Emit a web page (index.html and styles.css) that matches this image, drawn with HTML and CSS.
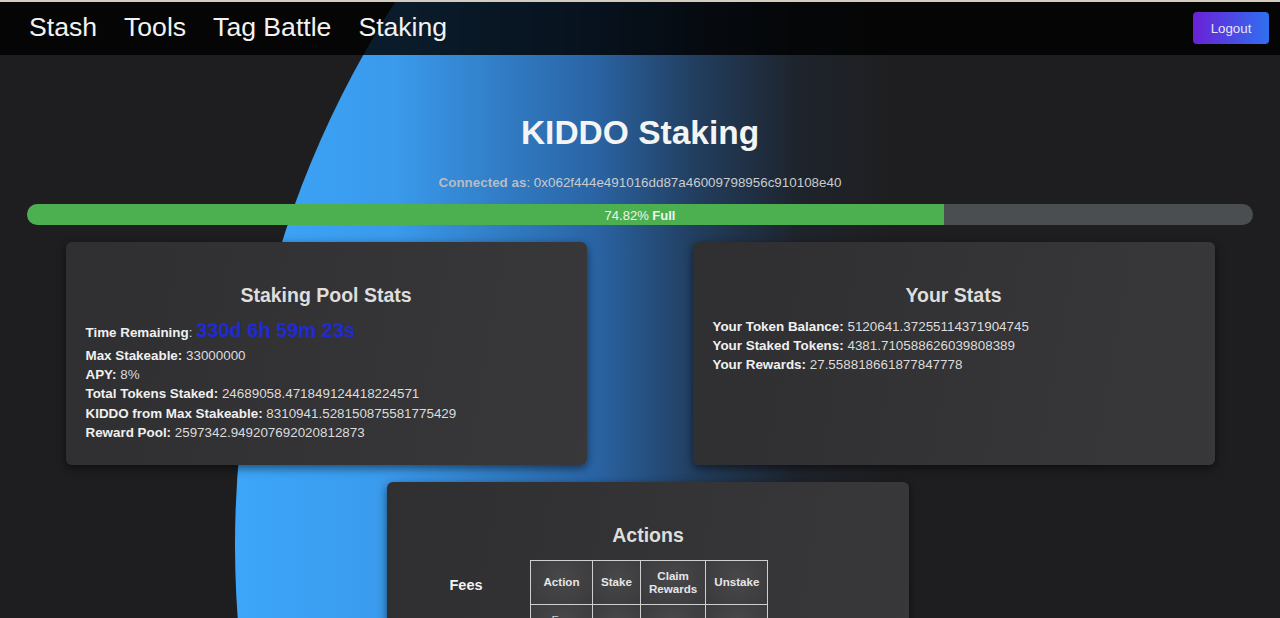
FILE: index.html
```html
<!DOCTYPE html>
<html lang="en">
<head>
<meta charset="utf-8">
<title>KIDDO Staking</title>
<link rel="stylesheet" href="styles.css">
</head>
<body>
<div class="page">
  <div class="glow"></div>
  <nav class="nav">
    <div class="nav-links">
      <a class="nav-link" href="#">Stash</a>
      <a class="nav-link" href="#">Tools</a>
      <a class="nav-link" href="#">Tag Battle</a>
      <a class="nav-link" href="#">Staking</a>
    </div>
    <button class="logout" type="button">Logout</button>
  </nav>
  <main class="main">
    <h1 class="title">KIDDO Staking</h1>
    <p class="connected"><b>Connected as</b>: 0x062f444e491016dd87a46009798956c910108e40</p>
    <div class="progress">
      <div class="progress-fill" style="width:74.82%"></div>
      <span class="progress-label">74.82% <b>Full</b></span>
    </div>
    <div class="cards">
      <section class="card">
        <h3 class="card-title">Staking Pool Stats</h3>
        <div class="row row-timer"><b>Time Remaining</b>: <span class="timer">330d 6h 59m 23s</span></div>
        <div class="row"><b>Max Stakeable:</b> 33000000</div>
        <div class="row"><b>APY:</b> 8%</div>
        <div class="row"><b>Total Tokens Staked:</b> 24689058.471849124418224571</div>
        <div class="row"><b>KIDDO from Max Stakeable:</b> 8310941.528150875581775429</div>
        <div class="row"><b>Reward Pool:</b> 2597342.949207692020812873</div>
      </section>
      <section class="card">
        <h3 class="card-title">Your Stats</h3>
        <div class="row"><b>Your Token Balance:</b> 5120641.37255114371904745</div>
        <div class="row"><b>Your Staked Tokens:</b> 4381.710588626039808389</div>
        <div class="row"><b>Your Rewards:</b> 27.558818661877847778</div>
      </section>
    </div>
    <div class="actions-row">
      <section class="card card-actions">
        <h3 class="card-title">Actions</h3>
        <div class="fees">
          <div class="fees-label">Fees</div>
          <table class="fee-table">
            <tr>
              <th class="col-action">Action</th>
              <th>Stake</th>
              <th>Claim<br>Rewards</th>
              <th>Unstake</th>
            </tr>
            <tr>
              <td>Fee<br>(%)</td>
              <td>0%</td>
              <td>0%</td>
              <td>0%</td>
            </tr>
          </table>
        </div>
      </section>
    </div>
  </main>
</div>
</body>
</html>
```

FILE: styles.css
```css
* {
  box-sizing: border-box;
}

html, body {
  margin: 0;
  padding: 0;
  background: #1e1e20;
}

body {
  font-family: "Liberation Sans", Arial, sans-serif;
  color: #e0e0e0;
  border-top: 2px solid #d4ccbe;
}

.page {
  position: relative;
  overflow: hidden;
  min-height: 616px;
}

.glow {
  position: absolute;
  left: 235px;
  top: -457px;
  width: 2000px;
  height: 2000px;
  border-radius: 50%;
  background: linear-gradient(90deg,
    #3ca6f9 0%,
    #3a9aec 8%,
    #3079c0 14%,
    #2a64a4 18%,
    #223e5f 23%,
    rgba(30, 38, 48, 0.8) 28%,
    rgba(30, 30, 32, 0) 33%);
  z-index: 0;
}

.nav {
  position: relative;
  z-index: 2;
  height: 53px;
  display: flex;
  align-items: center;
  justify-content: space-between;
  padding: 0 11px 0 29px;
  background: rgba(0, 0, 0, 0.82);
}

.nav-links {
  display: flex;
  gap: 27px;
  margin-top: -3px;
}

.nav-link {
  color: #f2f2f2;
  text-decoration: none;
  font-size: 26.6px;
}

.logout {
  width: 76px;
  height: 32px;
  border: none;
  border-radius: 4px;
  background: linear-gradient(90deg, #6a20d6, #2f70f0);
  color: #e8e4fb;
  font-family: "Liberation Sans", Arial, sans-serif;
  font-size: 13.3px;
  padding: 0;
  margin-top: -1px;
}

.main {
  position: relative;
  z-index: 1;
  padding: 0 27px 40px;
}

.title {
  margin: 58px 0 0;
  text-align: center;
  font-size: 33.5px;
  line-height: 40px;
  font-weight: bold;
  color: #f4f4f4;
}

.connected {
  margin: 22px 0 0;
  text-align: center;
  font-size: 13.4px;
  line-height: 16px;
  color: #c8ccd0;
}

.connected b {
  color: #b8bcc2;
}

.progress {
  position: relative;
  margin-top: 13px;
  height: 21px;
  border-radius: 10.5px;
  background: #4a4e50;
  overflow: hidden;
}

.progress-fill {
  height: 100%;
  background: #4caf50;
}

.progress-label {
  position: absolute;
  inset: 0;
  text-align: center;
  font-size: 13px;
  line-height: 23px;
  color: #eef6ee;
}

.cards {
  display: grid;
  grid-template-columns: 521px 522px;
  justify-content: center;
  column-gap: 106px;
  margin-top: 17px;
}

.card {
  background: linear-gradient(100deg, #2f2f31, #38383a);
  border-radius: 6px;
  box-shadow: 0 3px 10px rgba(0, 0, 0, 0.55);
  padding: 20px 20px 22px;
  min-height: 223px;
}

.card-title {
  margin: 21.5px 0 10px;
  text-align: center;
  font-size: 19.5px;
  line-height: 23px;
  color: #dedede;
}

.row {
  font-size: 13.4px;
  line-height: 19.4px;
  color: #dcdcdc;
}

.row b {
  color: #f0f0f0;
}

.row-timer {
  line-height: 27px;
}

.timer {
  font-size: 20px;
  font-weight: bold;
  color: #1f2bd2;
}

.actions-row {
  display: flex;
  justify-content: center;
  padding-left: 16px;
  margin-top: 17px;
}

.card-actions {
  width: 522px;
  min-height: 200px;
}

.fees {
  display: flex;
  align-items: flex-start;
  gap: 5px;
  margin-top: 13px;
}

.fees-label {
  width: 118px;
  text-align: center;
  font-weight: bold;
  font-size: 14.5px;
  line-height: 17px;
  padding-top: 17px;
  color: #f2f2f2;
}

.fee-table {
  border-collapse: collapse;
  font-size: 11.6px;
  line-height: 13.5px;
  color: #e6e6e6;
}

.fee-table th,
.fee-table td {
  border: 1px solid #cfcfcf;
  padding: 8px;
  text-align: center;
  background: radial-gradient(circle at 50% 40%, #48484b, #3a3a3c);
}

.fee-table th {
  font-weight: bold;
}

.fee-table td {
  font-weight: normal;
  color: #cfcfcf;
}

.col-action {
  width: 62px;
}
```
